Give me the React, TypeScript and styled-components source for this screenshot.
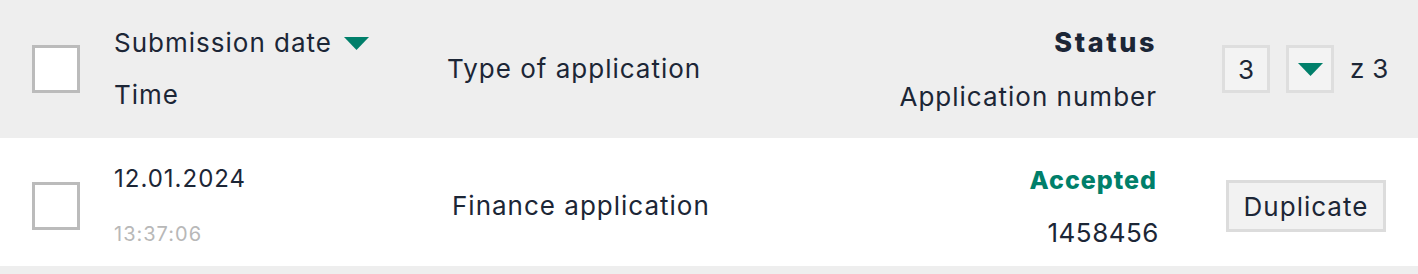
import React from "react";
import styled, { createGlobalStyle } from "styled-components";

const Global = createGlobalStyle`
  html, body { margin: 0; padding: 0; background: #eeeeee; }
  body { font-family: Inter, "Noto Sans", sans-serif; color: #1c2636; }
`;

const Table = styled.div`
  width: 1418px;
  display: flex;
  flex-direction: column;
  padding-bottom: 8px;
  background: #eeeeee;
`;

const Row = styled.div<{ $head?: boolean }>`
  display: grid;
  grid-template-columns: 82px 333px 1fr auto 229px;
  align-items: center;
  padding: ${(p) => (p.$head ? "0 32px" : "8px 32px 0")};
  box-sizing: border-box;
  height: ${(p) => (p.$head ? 138 : 128)}px;
  background: ${(p) => (p.$head ? "#eeeeee" : "#ffffff")};
`;

const Check = styled.span<{ $dy?: number }>`
  display: block;
  width: 42px;
  height: 42px;
  border: 3px solid #bbbbbb;
  background: #ffffff;
  margin-top: ${(p) => p.$dy ?? 0}px;
`;

const Stack = styled.div<{ $align?: "start" | "end"; $gap: number; $dy?: number }>`
  display: flex;
  flex-direction: column;
  align-items: ${(p) => (p.$align === "end" ? "flex-end" : "flex-start")};
  gap: ${(p) => p.$gap}px;
  margin-top: ${(p) => p.$dy ?? 0}px;
`;

const Text = styled.span<{ $size?: number; $weight?: number; $color?: string; $ls?: number; $mr?: number }>`
  font-size: ${(p) => p.$size ?? 26}px;
  font-weight: ${(p) => p.$weight ?? 400};
  color: ${(p) => p.$color ?? "#1c2636"};
  letter-spacing: ${(p) => p.$ls ?? 1}px;
  margin-right: ${(p) => p.$mr ?? 0}px;
  line-height: 30px;
  white-space: nowrap;
  display: inline-flex;
  align-items: center;
`;

const Cell = styled.div<{ $indent?: number }>`
  padding-left: ${(p) => p.$indent ?? 0}px;
`;

const Actions = styled.div`
  display: flex;
  justify-content: flex-end;
  align-items: center;
`;

const Pager = styled.div`
  display: flex;
  align-items: center;
  gap: 16px;
  width: 164px;
`;

const PageBox = styled.span`
  box-sizing: border-box;
  flex: 0 0 48px;
  height: 48px;
  border: 3px solid #dedede;
  background: #f3f3f3;
  display: flex;
  align-items: center;
  justify-content: center;
  font-size: 26px;
  color: #1c2636;
`;

const Button = styled.button`
  box-sizing: border-box;
  height: 52px;
  width: 160px;
  border: 3px solid #dcdcdc;
  background: #f2f2f2;
  font-family: inherit;
  font-size: 26px;
  letter-spacing: 1px;
  color: #1c2636;
  padding: 0;
`;

const Caret = ({ ml = 0 }: { ml?: number }) => (
  <svg width="25" height="13" viewBox="0 0 25 13" style={{ marginLeft: ml }}>
    <polygon points="0,0 25,0 12.5,13" fill="#007f6a" />
  </svg>
);

export default function App() {
  return (
    <>
      <Global />
      <Table>
        <Row $head>
          <Cell>
            <Check />
          </Cell>
          <Stack $gap={22}>
            <Text>
              Submission date
              <Caret ml={12} />
            </Text>
            <Text>Time</Text>
          </Stack>
          <Cell>
            <Text>Type of application</Text>
          </Cell>
          <Stack $align="end" $gap={24} $dy={2}>
            <Text $weight={800} $size={27} $ls={2.6}>Status</Text>
            <Text>Application number</Text>
          </Stack>
          <Actions>
            <Pager>
              <PageBox>3</PageBox>
              <PageBox>
                <Caret />
              </PageBox>
              <Text $ls={0.3}>z 3</Text>
            </Pager>
          </Actions>
        </Row>
        <Row>
          <Cell>
            <Check $dy={-1} />
          </Cell>
          <Stack $gap={25}>
            <Text $size={24} $ls={1}>12.01.2024</Text>
            <Text $size={20} $color="#b8b8b8" $ls={1}>13:37:06</Text>
          </Stack>
          <Cell $indent={5}>
            <Text>Finance application</Text>
          </Cell>
          <Stack $align="end" $gap={23}>
            <Text $size={25} $weight={800} $color="#007f6a" $ls={1}>Accepted</Text>
            <Text $ls={0.5} $mr={-2}>1458456</Text>
          </Stack>
          <Actions>
            <Button>Duplicate</Button>
          </Actions>
        </Row>
      </Table>
    </>
  );
}
